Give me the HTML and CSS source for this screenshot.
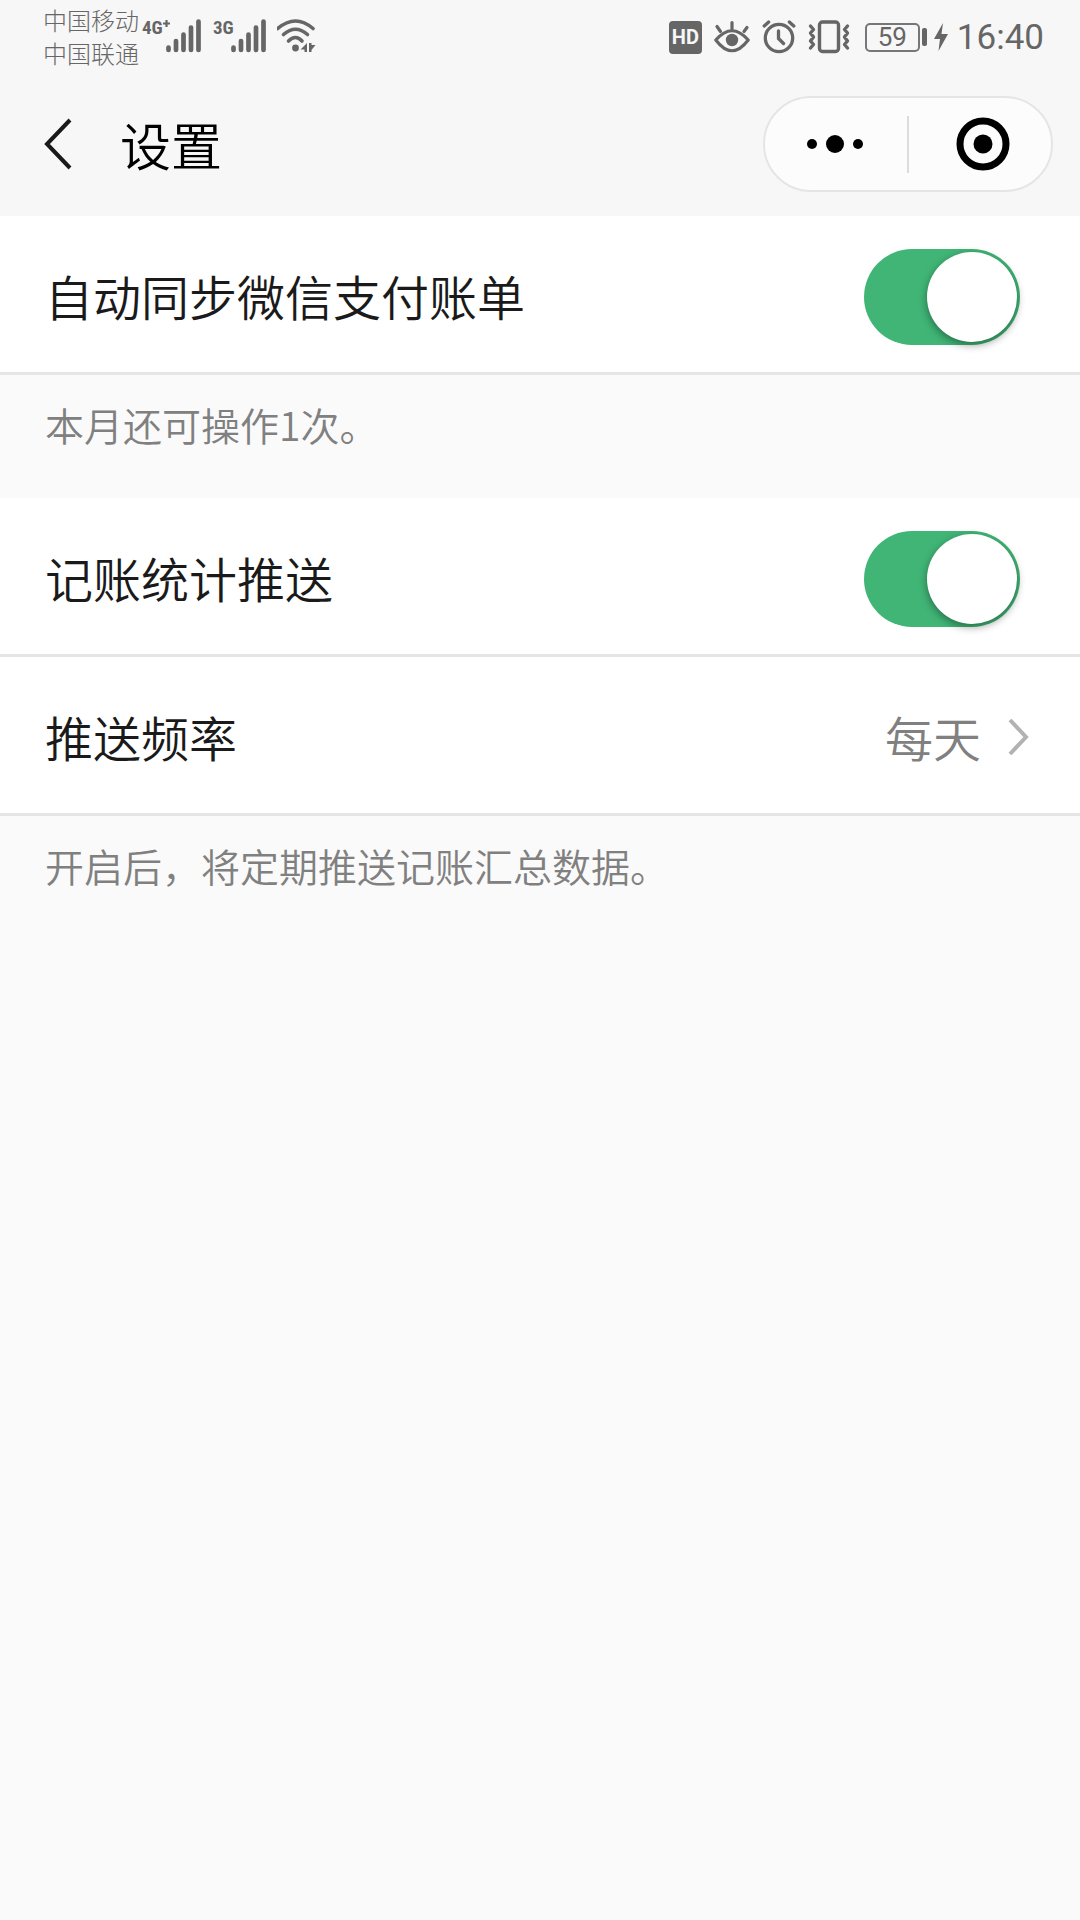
FILE: index.html
```html
<!DOCTYPE html>
<html lang="zh-CN">
<head>
<meta charset="utf-8">
<meta name="viewport" content="width=device-width, initial-scale=1">
<title>设置</title>
<link rel="stylesheet" href="styles.css">
</head>
<body>
<div class="status-bar">
  <div class="status-left">
    <div class="carriers"><span>中国移动</span><span>中国联通</span></div>
    <svg class="signal" width="60" height="40" viewBox="0 -3 60 40" role="img" aria-label="4G+">
      <text x="0" y="15" class="net-label">4G</text>
      <path d="M21 4.500h7M24.500 1v7" stroke="currentColor" stroke-width="2.200"/>
      <path d="M26.500 28.500v2.500M34 22v9M41.500 15.500v15.500M49 8.500v22.500M56.500 2.500v28.500" stroke="currentColor" stroke-width="4.700" stroke-linecap="round"/>
    </svg>
    <svg class="signal" width="55" height="40" viewBox="5 -3 55 40" role="img" aria-label="3G">
      <text x="6" y="15" class="net-label">3G</text>
      <path d="M26.500 28.500v2.500M34 22v9M41.500 15.500v15.500M49 8.500v22.500M56.500 2.500v28.500" stroke="currentColor" stroke-width="4.700" stroke-linecap="round"/>
    </svg>
    <svg class="wifi" width="40" height="34" viewBox="1 0 40 34" role="img" aria-label="WLAN">
      <g fill="none" stroke="currentColor" stroke-width="3.600" stroke-linecap="round">
        <path d="M1.800 9.500Q19.500-5.500 37 9.500"/>
        <path d="M7.500 15.500Q19.500 5 31.500 15.500"/>
        <path d="M12.500 22Q19.500 15 26 22"/>
      </g>
      <circle cx="19.500" cy="29" r="3.400" fill="currentColor"/>
      <path d="M31 24v9h-2.500v-2.500h-4zM33 24h2.500v2h4l-4 5v2H33z" fill="currentColor"/>
    </svg>
  </div>
  <div class="status-right">
    <span class="hd">HD</span>
    <svg width="36" height="34" viewBox="0 0 36 34" aria-hidden="true">
      <g fill="none" stroke="currentColor" stroke-width="3.200" stroke-linecap="round">
        <path d="M1.800 20Q18 1.500 34.200 20 18 41.500 1.800 20z" stroke-linejoin="round"/>
        <path d="M18 2.500v6.500M3 6.500l3.500 5M33 7.500l-3 4"/>
      </g>
      <circle cx="18" cy="20" r="6.200" fill="currentColor"/>
    </svg>
    <svg width="34" height="34" viewBox="0 0 34 34" fill="none" stroke="currentColor" stroke-width="3.300" stroke-linecap="round" aria-hidden="true">
      <circle cx="17" cy="18" r="13.700"/>
      <path d="M16.500 11v7.500l5 5M2.200 6l4.500-4M31.800 6l-4.500-4"/>
    </svg>
    <svg width="42" height="34" viewBox="0 0 42 34" fill="none" stroke="currentColor" stroke-width="3.400" stroke-linecap="round" stroke-linejoin="round" aria-hidden="true">
      <rect x="11.500" y="2" width="19" height="29.500" rx="3"/>
      <path d="M2.500 6l3 3.500-3 3.500 3 4-3 4 3 3.500-3 3.500M39.500 6l-3 3.500 3 3.500-3 4 3 4-3 3.500 3 3.500"/>
    </svg>
    <div class="battery"><span class="level">59</span><span class="cap"></span>
      <svg width="14" height="28" viewBox="0 0 14 28" aria-hidden="true"><path d="M9 0L0 16h6L4.500 28 14 11H7.500z" fill="currentColor"/></svg>
    </div>
    <time class="clock">16:40</time>
  </div>
</div>

<header class="nav-bar">
  <button class="back" type="button" aria-label="返回">
    <svg width="28" height="52" viewBox="0 0 28 52" fill="none" stroke="#1a1a1a" stroke-width="4"><path d="M26 2L3 26l23 24"/></svg>
  </button>
  <h1 class="title">设置</h1>
  <div class="capsule">
    <button class="capsule-button more" type="button" aria-label="更多">
      <svg width="56" height="18" viewBox="0 0 56 18"><circle cx="5" cy="9" r="5"/><circle cx="28" cy="9" r="9"/><circle cx="51" cy="9" r="5"/></svg>
    </button>
    <span class="divider"></span>
    <button class="capsule-button close" type="button" aria-label="关闭">
      <svg width="54" height="54" viewBox="0 0 54 54"><circle cx="27" cy="27" r="23" fill="none" stroke="#000" stroke-width="7"/><circle cx="27" cy="27" r="9.500"/></svg>
    </button>
  </div>
</header>

<main>
  <section class="group">
    <div class="row">
      <label class="label" for="sync">自动同步微信支付账单</label>
      <input class="switch" id="sync" type="checkbox" role="switch" checked>
    </div>
    <p class="note">本月还可操作1次。</p>
  </section>
  <section class="group">
    <div class="row">
      <label class="label" for="push">记账统计推送</label>
      <input class="switch" id="push" type="checkbox" role="switch" checked>
    </div>
    <div class="row picker">
      <label class="label" for="frequency">推送频率</label>
      <select class="value" id="frequency">
        <option selected>每天</option>
        <option>每周</option>
        <option>每月</option>
      </select>
      <svg class="chevron" width="21" height="40" viewBox="0 0 21 40" fill="none" stroke="#b2b2b2" stroke-width="4" aria-hidden="true"><path d="M2 2l16 17L2 36"/></svg>
    </div>
    <p class="note">开启后，将定期推送记账汇总数据。</p>
  </section>
</main>
</body>
</html>
```
FILE: styles.css
```css
* {
  box-sizing: border-box;
}

body {
  margin: 0;
  min-height: 100vh;
  background: #fafafa;
  color: #1a1a1a;
  font-family: "Noto Sans CJK SC", sans-serif;
  font-weight: 350;
}

button {
  border: 0;
  padding: 0;
  background: none;
  display: flex;
  align-items: center;
  justify-content: center;
  cursor: pointer;
}

svg {
  display: block;
  flex: none;
}

/* System status bar */
.status-bar {
  display: flex;
  justify-content: space-between;
  height: 72px;
  padding: 0 36px 0 43px;
  background: #f7f7f7;
  color: #666;
}

.status-left,
.status-right {
  display: flex;
  align-items: center;
}

.status-left {
  gap: 10px;
}

.carriers {
  display: flex;
  flex-direction: column;
  margin-right: -7px;
  padding-bottom: 1px;
  font-size: 24px;
  font-weight: 300;
  line-height: 33px;
}

.net-label {
  fill: currentColor;
  font: bold 19px "Liberation Sans Narrow", "Roboto Condensed", Roboto, sans-serif;
}

.status-right {
  gap: 12px;
  padding-top: 2px;
  font-family: Roboto, sans-serif;
  font-weight: 400;
}

.hd {
  width: 33px;
  border-radius: 4px;
  background: #666;
  color: #f7f7f7;
  font-size: 20px;
  font-weight: 700;
  line-height: 33px;
  text-align: center;
}

.battery {
  display: flex;
  align-items: center;
  margin-left: 3px;
}

.level {
  width: 55px;
  border: 2px solid #777;
  border-radius: 5px;
  font-size: 26px;
  line-height: 25px;
  text-align: center;
}

.cap {
  width: 5px;
  height: 18px;
  margin: 0 7px 0 2px;
  border-radius: 2px;
  background: #666;
}

.clock {
  margin-left: -3px;
  padding-top: 2px;
  font-size: 35px;
  line-height: 48px;
}

/* Navigation bar */
.nav-bar {
  display: flex;
  align-items: center;
  height: 144px;
  padding: 0 27px 0 44px;
  background: #f7f7f7;
}

.title {
  flex: 1;
  margin: 0 0 0 48px;
  color: #000;
  font-size: 51px;
  font-weight: 350;
  line-height: 72px;
}

.capsule {
  display: flex;
  align-items: center;
  width: 290px;
  height: 96px;
  border: 2px solid #e5e5e5;
  border-radius: 48px;
  background: #fcfcfc;
}

.capsule-button {
  flex: 1;
  height: 100%;
}

.more svg {
  margin-right: 2px;
}

.close svg {
  margin-left: 5px;
}

.divider {
  width: 2px;
  height: 57px;
  background: #dcdcdc;
}

/* Settings list */
.row {
  display: flex;
  align-items: center;
  height: 159px;
  padding: 6px 60px 0 45px;
  border-bottom: 3px solid #e5e5e5;
  background: #fff;
}

.picker {
  padding-right: 51px;
}

.label {
  flex: 1;
  padding-bottom: 4px;
  font-size: 48px;
  line-height: 72px;
}

.switch {
  appearance: none;
  width: 156px;
  height: 96px;
  margin: 0;
  padding: 3px;
  border-radius: 48px;
  background: #40b576;
  cursor: pointer;
}

.switch::before {
  content: "";
  display: block;
  width: 90px;
  height: 90px;
  border-radius: 50%;
  background: #fff;
  box-shadow: 0 3px 9px rgba(0, 0, 0, 0.4);
}

.switch:checked::before {
  margin-left: auto;
}

.value {
  appearance: none;
  border: 0;
  padding: 0 0 4px;
  background: none;
  color: #808080;
  font: inherit;
  font-size: 48px;
  line-height: 72px;
}

.chevron {
  margin-left: 26px;
}

.note {
  margin: 0;
  padding: 19px 45px 44px;
  color: #808080;
  font-size: 39px;
  line-height: 60px;
}
```
